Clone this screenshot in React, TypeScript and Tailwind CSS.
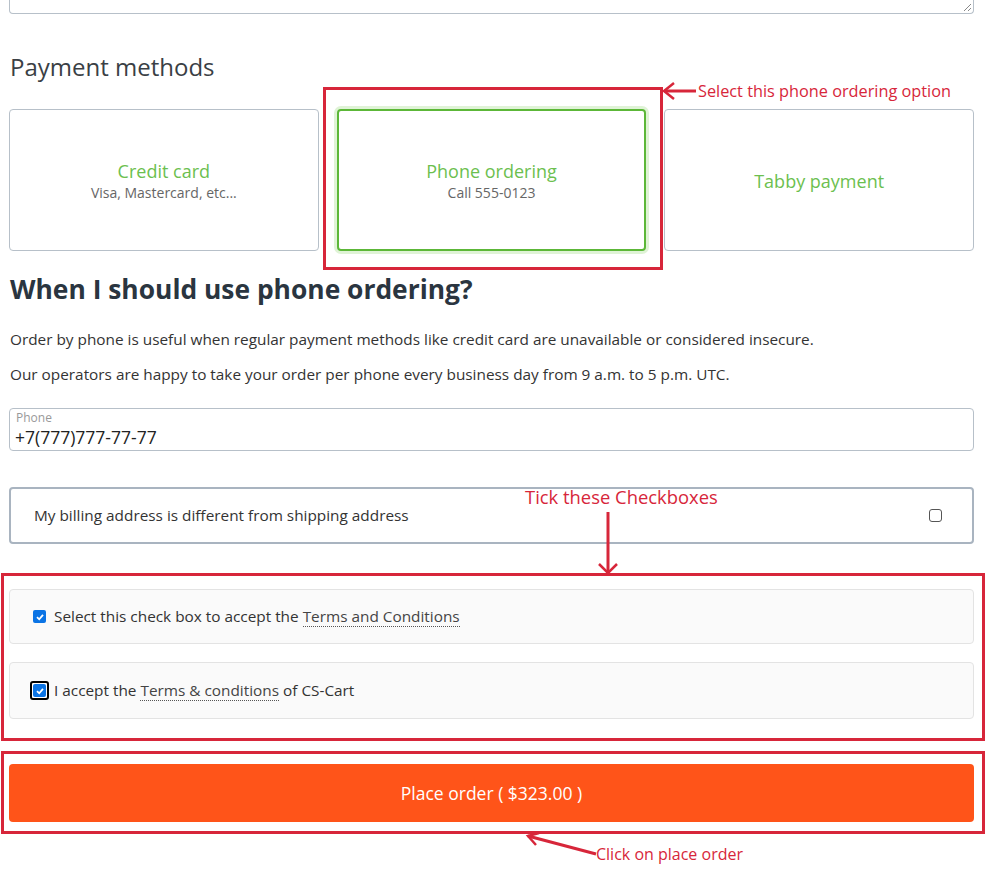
import React from "react";

const RED = "#d7263a";

function Card({ title, sub, active }: { title: string; sub?: string; active?: boolean }) {
  return (
    <div
      className={
        "h-[142px] rounded-[4px] flex flex-col items-center justify-center pt-[2px] bg-white " +
        (active
          ? "border-2 border-[#5cb738] shadow-[0_0_0_3px_#dff3d6]"
          : "border border-[#b7c0c9]")
      }
    >
      <div className="text-[18px] leading-[24px] text-[#6cbf4f]">{title}</div>
      {sub && <div className="text-[14px] leading-[20px] text-[#666]">{sub}</div>}
    </div>
  );
}

function Check() {
  return (
    <span className="w-[13px] h-[13px] rounded-[2px] bg-[#0b74e5] flex items-center justify-center">
      <svg width="10" height="10" viewBox="0 0 10 10">
        <path d="M2 5.2 L4.2 7.3 L8 2.8" fill="none" stroke="white" strokeWidth="1.8" />
      </svg>
    </span>
  );
}

export default function App() {
  return (
    <div
      className="relative w-[986px] h-[871px] bg-white overflow-hidden text-[#333]"
      style={{ fontFamily: '"Open Sans", "Noto Sans", sans-serif' }}
    >
      <div className="pl-[9px] w-[974px]">
        {/* textarea remnant */}
        <div className="relative h-[14px] border border-t-0 border-[#b7c0c9] rounded-b-[4px]">
          <svg className="absolute right-[1px] bottom-[1px]" width="10" height="10" viewBox="0 0 10 10">
            <line x1="9" y1="2" x2="2" y2="9" stroke="#888" strokeWidth="1" />
            <line x1="9" y1="6" x2="6" y2="9" stroke="#888" strokeWidth="1" />
          </svg>
        </div>

        <h2 className="mt-[37px] ml-[1px] text-[24px] leading-[32px] font-normal text-[#3a3f45]">Payment methods</h2>

        <div className="mt-[26px] grid grid-cols-3 gap-[18px]">
          <Card title="Credit card" sub="Visa, Mastercard, etc..." />
          <Card title="Phone ordering" sub="Call 555-0123" active />
          <Card title="Tabby payment" />
        </div>

        <h1 className="mt-[21px] ml-[1px] text-[26.4px] leading-[34px] font-bold text-[#2a3540]">
          When I should use phone ordering?
        </h1>

        <p className="mt-[23px] ml-[1px] text-[15.35px] leading-[20px] text-[#333]">
          Order by phone is useful when regular payment methods like credit card are unavailable or considered insecure.
        </p>
        <p className="mt-[15px] ml-[1px] text-[15.35px] leading-[20px] text-[#333]">
          Our operators are happy to take your order per phone every business day from 9 a.m. to 5 p.m. UTC.
        </p>

        <div className="mt-[24px] h-[43px] border border-[#b7c0c9] rounded-[4px] px-[5px] pt-[2px]">
          <div className="text-[12px] leading-[13px] text-[#999] pl-[1px]">Phone</div>
          <div className="mt-[4px] text-[17.5px] leading-[19px] text-[#222]">+7(777)777-77-77</div>
        </div>

        <div className="mt-[36px] h-[57px] border-2 border-[#a9b4c0] rounded-[4px] flex items-center justify-between pl-[23px] pr-[30px]">
          <span className="text-[15.35px] text-[#333]">My billing address is different from shipping address</span>
          <span className="w-[13px] h-[13px] border border-[#555] rounded-[3px] bg-white" />
        </div>

        <div className="mt-[45px] h-[55px] border border-[#e3e3e3] rounded-[4px] bg-[#fafafa] flex items-center pl-[23px]">
          <Check />
          <span className="ml-[8px] text-[15.35px]">
            Select this check box to accept the{" "}
            <span className="text-[#444] border-b border-dotted border-[#555]">Terms and Conditions</span>
          </span>
        </div>

        <div className="mt-[18px] h-[57px] border border-[#e3e3e3] rounded-[4px] bg-[#fafafa] flex items-center pl-[20px]">
          <span className="w-[19px] h-[19px] rounded-[3px] border-2 border-black bg-white flex items-center justify-center">
            <Check />
          </span>
          <span className="ml-[5px] text-[15.35px]">
            I accept the{" "}
            <span className="text-[#444] border-b border-dotted border-[#555]">Terms &amp; conditions</span> of CS-Cart
          </span>
        </div>

        <button className="mt-[45px] w-full h-[58px] rounded-[4px] bg-[#ff5419] text-white text-[17.5px] flex items-center justify-center">
          Place order ( $323.00 )
        </button>
      </div>

      {/* annotations */}
      <div className="absolute left-[323px] top-[87px] w-[340px] h-[183px] border-[3px] border-[#d7263a]" />
      <svg className="absolute left-[660px] top-[80px]" width="40" height="24" viewBox="0 0 40 24">
        <line x1="4" y1="11" x2="36" y2="11" stroke={RED} strokeWidth="3" />
        <path d="M14 3 L4 11 L14 19" fill="none" stroke={RED} strokeWidth="2.5" />
      </svg>
      <div className="absolute left-[698px] top-[80px] text-[16.3px] leading-[22px]" style={{ color: RED }}>
        Select this phone ordering option
      </div>

      <div className="absolute left-[525px] top-[485px] text-[18.4px] leading-[24px]" style={{ color: RED }}>
        Tick these Checkboxes
      </div>
      <svg className="absolute left-[596px] top-[512px]" width="26" height="64" viewBox="0 0 26 64">
        <line x1="12" y1="0" x2="12" y2="61" stroke={RED} strokeWidth="3" />
        <path d="M3 52 L12 61 L21 52" fill="none" stroke={RED} strokeWidth="2.5" />
      </svg>
      <div className="absolute left-[1px] top-[573px] w-[984px] h-[168px] border-[3px] border-[#d7263a]" />

      <div className="absolute left-[1px] top-[751px] w-[984px] h-[83px] border-[3px] border-[#d7263a]" />
      <svg className="absolute left-[524px] top-[832px]" width="76" height="26" viewBox="0 0 76 26">
        <line x1="4" y1="4" x2="72" y2="22" stroke={RED} strokeWidth="3" />
        <path d="M15 1 L4 4 L12 13" fill="none" stroke={RED} strokeWidth="2.5" />
      </svg>
      <div className="absolute left-[596px] top-[843px] text-[16px] leading-[22px]" style={{ color: RED }}>
        Click on place order
      </div>
    </div>
  );
}
